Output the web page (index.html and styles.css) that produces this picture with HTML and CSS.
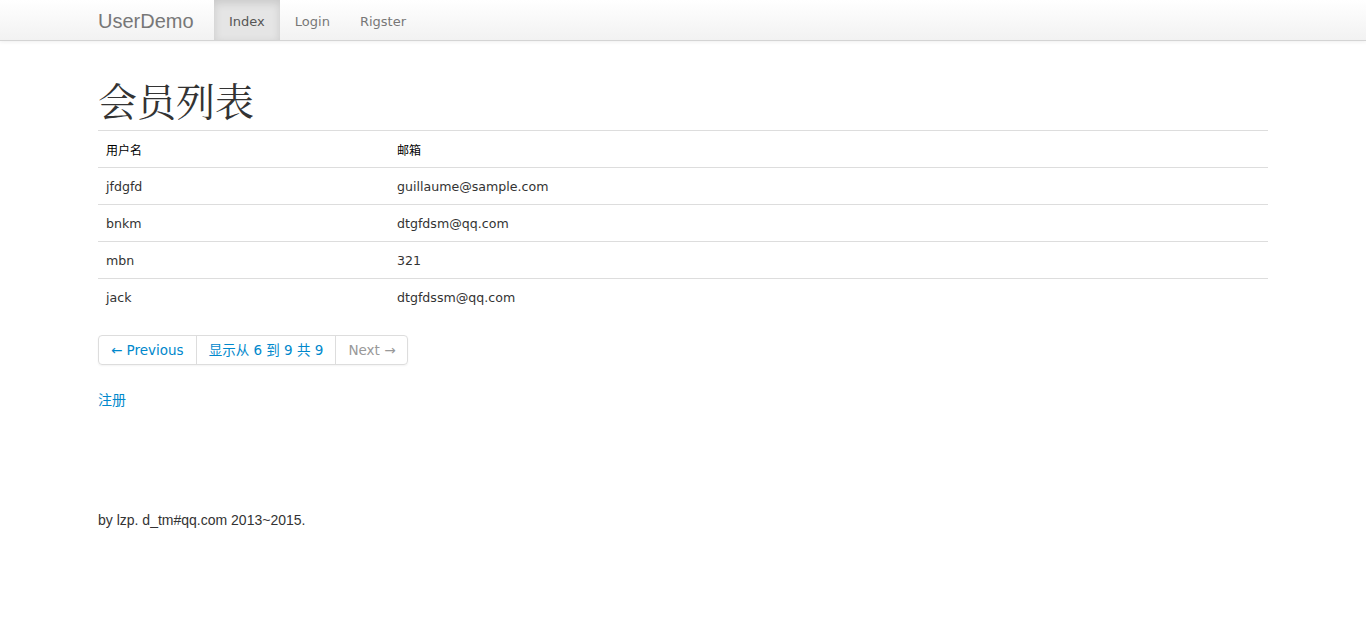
FILE: index.html
```html
<!DOCTYPE html>
<html lang="zh-CN">
<head>
<meta charset="utf-8">
<title>UserDemo</title>
<link rel="stylesheet" href="styles.css">
</head>
<body>
<div class="navbar">
  <div class="container nav-inner">
    <a class="brand" href="#">UserDemo</a>
    <ul class="nav">
      <li class="active"><a href="#">Index</a></li>
      <li><a href="#">Login</a></li>
      <li><a href="#">Rigster</a></li>
    </ul>
  </div>
</div>
<div class="container main">
  <h1 class="title">会员列表</h1>
  <table class="table">
    <thead>
      <tr><th class="col-name">用户名</th><th>邮箱</th></tr>
    </thead>
    <tbody>
      <tr><td>jfdgfd</td><td>guillaume@sample.com</td></tr>
      <tr><td>bnkm</td><td>dtgfdsm@qq.com</td></tr>
      <tr><td>mbn</td><td>321</td></tr>
      <tr><td>jack</td><td>dtgfdssm@qq.com</td></tr>
    </tbody>
  </table>
  <div class="pager">
    <a class="page prev" href="#">← Previous</a>
    <a class="page info" href="#">显示从 6 到 9 共 9</a>
    <span class="page disabled">Next →</span>
  </div>
  <p class="reg"><a href="#">注册</a></p>
  <footer class="footer">by lzp. d_tm#qq.com 2013~2015.</footer>
</div>
</body>
</html>
```

FILE: styles.css
```css
* { box-sizing: border-box; }
html, body { margin: 0; padding: 0; background: #fff; }
body {
  font-family: "DejaVu Sans", Verdana, "Noto Sans CJK SC", sans-serif;
  font-size: 13px;
  color: #333;
}
a { text-decoration: none; color: #0088cc; }
.container { width: 1170px; margin: 0 auto; }

.navbar {
  height: 41px;
  background: linear-gradient(to bottom, #ffffff, #f2f2f2);
  border-bottom: 1px solid #d4d4d4;
  box-shadow: 0 1px 4px rgba(0,0,0,0.065);
}
.nav-inner { display: flex; align-items: stretch; height: 40px; }
.brand {
  font-family: "Liberation Sans", Arial, sans-serif;
  font-size: 20px;
  color: #777;
  line-height: 40px;
  padding-top: 1px;
  width: 116px;
}
.nav { list-style: none; margin: 0; padding: 0; display: flex; }
.nav li a {
  display: block;
  line-height: 40px;
  padding: 2px 15px 0;
  height: 40px;
  color: #777;
  font-size: 13px;
}
.nav li.active a {
  background: #e5e5e5;
  color: #555;
  box-shadow: inset 0 3px 8px rgba(0,0,0,0.125);
}

.title {
  font-family: "Noto Serif CJK SC", "Liberation Serif", "Noto Sans CJK SC", serif;
  font-weight: normal;
  font-size: 39px;
  line-height: 44px;
  margin: 36px 0 9px;
  color: #333;
}
.table { width: 100%; border-collapse: collapse; }
.table th, .table td {
  text-align: left;
  padding: 1px 8px 0;
  height: 37px;
  border-top: 1px solid #dddddd;
  vertical-align: middle;
}
.table th { font-weight: normal; font-size: 12px; color: #000; font-family: "Noto Sans CJK SC", sans-serif; }
.table td { color: #333; font-size: 12.6px; }
.col-name { width: 291px; }

.pager {
  display: inline-flex;
  margin-top: 19px;
  border: 1px solid #ddd;
  border-radius: 4px;
  box-shadow: 0 1px 2px rgba(0,0,0,0.05);
  height: 30px;
}
.page {
  line-height: 29px;
  padding: 0 12px;
  border-left: 1px solid #ddd;
  font-size: 13.5px;
}
.page.prev { border-left: none; }
.page.disabled { color: #999; }
.reg { margin: 24px 0 0; font-size: 14px; font-family: "Noto Sans CJK SC", sans-serif; }
.footer {
  margin-top: 103px;
  font-family: "Liberation Sans", Arial, sans-serif;
  font-size: 14px;
  color: #333;
}
```
